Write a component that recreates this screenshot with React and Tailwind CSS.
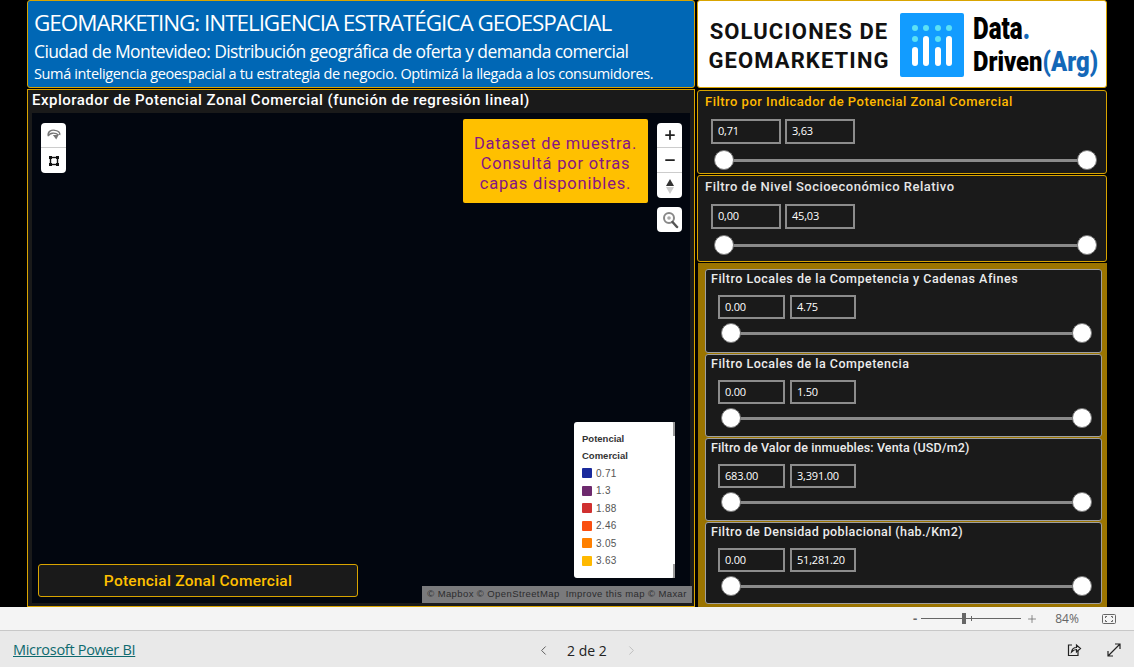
import { ChevronLeft, ChevronRight, Plus, Minus } from 'lucide-react';

const DIN = 'font-["Roboto",sans-serif]';
const LEGEND = [
  ['0.71', 'bg-[#1a2a9c]'],
  ['1.3', 'bg-[#6e2a6e]'],
  ['1.88', 'bg-[#d03030]'],
  ['2.46', 'bg-[#fa4f10]'],
  ['3.05', 'bg-[#ff8000]'],
  ['3.63', 'bg-[#ffb900]'],
];
const INNER = [
  { title: 'Filtro Locales de la Competencia y Cadenas Afines', min: '0.00', max: '4.75', h: 'h-[84px]', track: 'tracking-[0.5px]' },
  { title: 'Filtro Locales de la Competencia', min: '0.00', max: '1.50', h: 'h-[83px]', track: 'tracking-[0.5px]' },
  { title: 'Filtro de Valor de inmuebles: Venta (USD/m2)', min: '683.00', max: '3,391.00', h: 'h-[83px]', track: 'tracking-[0.12px]' },
  { title: 'Filtro de Densidad poblacional (hab./Km2)', min: '0.00', max: '51,281.20', h: 'h-[82px]', track: 'tracking-[0.4px]' },
];

function Slider() {
  return (
    <div className="relative flex h-[22px] items-center justify-between">
      <div className="absolute left-2 right-2 top-[10px] h-[3px] bg-[#8a8a8a]" />
      <span className="relative h-[20px] w-[20px] rounded-full border border-[#777] bg-white" />
      <span className="relative h-[20px] w-[20px] rounded-full border border-[#777] bg-white" />
    </div>
  );
}

function ValueBox({ value, className }) {
  return (
    <div className={`flex items-center border-2 border-[#8c8c8c] pl-[5px] font-['Open_Sans',sans-serif] text-[11px] tracking-[-0.2px] text-white ${className}`}>
      {value}
    </div>
  );
}

function OuterFilter({ title, min, max, titleColor, className }) {
  return (
    <div className={`rounded-[3px] border border-[#d9a400] bg-[#1a1a1a] pl-[7px] pr-[9px] ${className}`}>
      <div className={`${DIN} mt-[2px] text-[13px] font-medium leading-[17px] tracking-[0.49px] ${titleColor}`}>{title}</div>
      <div className="ml-[6px] mt-[9px] flex gap-[4px]">
        <ValueBox value={min} className="h-[25px] w-[70px]" />
        <ValueBox value={max} className="h-[25px] w-[70px]" />
      </div>
      <div className="ml-[9px] mt-[5px]">
        <Slider />
      </div>
    </div>
  );
}

function InnerFilter({ title, min, max, h, track }) {
  return (
    <div className={`${h} rounded-[3px] border border-[#a0a0a0] bg-[#1a1a1a] pl-[5px] pr-[9px]`}>
      <div className={`${DIN} mt-[1px] text-[12.5px] font-medium leading-[16px] ${track} text-[#ececec]`}>{title}</div>
      <div className="ml-[7px] mt-[8px] flex gap-[5px]">
        <ValueBox value={min} className="h-[24px] w-[67px]" />
        <ValueBox value={max} className="h-[24px] w-[66px]" />
      </div>
      <div className="ml-[10px] mt-[3px]">
        <Slider />
      </div>
    </div>
  );
}

function Logo() {
  return (
    <svg width="64" height="64" viewBox="0 0 64 64" className="h-[64px] w-[64px]">
      <rect width="64" height="64" rx="2" fill="#129cff" />
      <g fill="#5ce1f5">
        <circle cx="15" cy="15" r="3" />
        <circle cx="26" cy="15" r="3" />
        <circle cx="38" cy="15" r="3" />
        <circle cx="49" cy="15" r="3" />
        <circle cx="15" cy="26" r="3" />
        <circle cx="38" cy="26" r="3" />
      </g>
      <g fill="#fff">
        <rect x="12" y="34" width="6" height="19" rx="3" />
        <rect x="23" y="23" width="6" height="30" rx="3" />
        <rect x="35" y="34" width="6" height="19" rx="3" />
        <rect x="46" y="23" width="6" height="30" rx="3" />
      </g>
    </svg>
  );
}

function MapButton({ children, className }) {
  return <div className={`flex w-[25px] items-center justify-center ${className}`}>{children}</div>;
}

export default function App() {
  return (
    <div className="flex h-[667px] w-[1134px] flex-col overflow-hidden bg-black">
      <div className="flex h-[607px] gap-[2px] pl-[27px]">
        {/* left column */}
        <div className="flex w-[668px] flex-col gap-[1px]">
          <div className="h-[88px] rounded-[3px] border border-[#d9a400] bg-[#0067b5] pl-[6px] font-['Open_Sans',sans-serif] text-white">
            <div className="mt-[7px] text-[22.5px] leading-[30px] tracking-[-1.05px]">GEOMARKETING: INTELIGENCIA ESTRATÉGICA GEOESPACIAL</div>
            <div className="mt-[1px] text-[17.5px] leading-[24px] tracking-[-0.6px]">Ciudad de Montevideo: Distribución geográfica de oferta y demanda comercial</div>
            <div className="mt-[1px] text-[14.5px] leading-[20px] tracking-[-0.36px]">Sumá inteligencia geoespacial a tu estrategia de negocio. Optimizá la llegada a los consumidores.</div>
          </div>
          <div className="flex flex-1 flex-col border border-[#d9a400] bg-[#1a1a1a] px-[4px] pb-[3px]">
            <div className={`${DIN} h-[23px] pt-[1px] text-[15px] font-medium leading-[19px] tracking-[0.49px] text-white`}>Explorador de Potencial Zonal Comercial (función de regresión lineal)</div>
            <div className="relative flex-1 bg-[#02060f]">
              {/* left map controls */}
              <div className="absolute left-[9px] top-[10px] flex w-[25px] flex-col divide-y divide-[#ccc] rounded-[4px] bg-white">
                <MapButton className="h-[25px]">
                  <svg width="16" height="16" viewBox="0 0 14 14" fill="none" stroke="#777" strokeWidth="1.2">
                    <path d="M2 8 C1 4 5 2 8 3 C11 3.5 12.5 5 12 7 M2 8 C3 5 8 4.500 11 7" />
                    <path d="M6 7 L11 7 L9 11 Z" fill="#777" stroke="none" />
                  </svg>
                </MapButton>
                <MapButton className="h-[25px]">
                  <svg width="12" height="12" viewBox="0 0 12 12" fill="none" stroke="#111" strokeWidth="1.4">
                    <rect x="2.500" y="2.500" width="7" height="7" />
                    <g fill="#111" stroke="none">
                      <rect x="1" y="1" width="3" height="3" />
                      <rect x="8" y="1" width="3" height="3" />
                      <rect x="1" y="8" width="3" height="3" />
                      <rect x="8" y="8" width="3" height="3" />
                    </g>
                  </svg>
                </MapButton>
              </div>
              {/* note */}
              <div className={`${DIN} absolute left-[431px] top-[6px] flex h-[84px] w-[185px] items-center justify-center rounded-[2px] bg-[#ffc000] pt-[6px] text-center text-[16.5px] leading-[20px] tracking-[0.8px] text-[#851485]`}>
                <div>
                  Dataset de muestra.
                  <br />
                  Consultá por otras
                  <br />
                  capas disponibles.
                </div>
              </div>
              {/* zoom controls */}
              <div className="absolute left-[625px] top-[10px] flex w-[25px] flex-col divide-y divide-[#ccc] rounded-[4px] bg-white">
                <MapButton className="h-[25px]">
                  <Plus size={14} strokeWidth={3} color="#222" />
                </MapButton>
                <MapButton className="h-[25px]">
                  <Minus size={14} strokeWidth={3} color="#222" />
                </MapButton>
                <MapButton className="h-[25px]">
                  <svg width="10" height="18" viewBox="0 0 10 18">
                    <path d="M5 2 L9 9 L1 9 Z" fill="#333" />
                    <path d="M5 17 L9 10 L1 10 Z" fill="#ccc" />
                  </svg>
                </MapButton>
              </div>
              <div className="absolute left-[625px] top-[94px] flex h-[25px] w-[25px] items-center justify-center rounded-[4px] bg-white">
                <svg width="18" height="18" viewBox="0 0 18 18" fill="none">
                  <circle cx="8" cy="7" r="5" stroke="#888" strokeWidth="2" />
                  <circle cx="8" cy="7" r="1.800" fill="#aaa" />
                  <path d="M11.500 11 L16 16" stroke="#555" strokeWidth="2.500" strokeLinecap="round" />
                </svg>
              </div>
              {/* legend */}
              <div className="absolute left-[542px] top-[309px] h-[156px] w-[101px] rounded-[3px] bg-white pl-[8px] pt-[8px] font-['Liberation_Sans',sans-serif] text-[10px] text-[#555]">
                <div className="absolute right-0 top-0 h-[14px] w-[2px] bg-[#999]" />
                <div className="absolute bottom-0 right-0 h-[14px] w-[2px] bg-[#999]" />
                <div className="text-[9.500px] font-bold leading-[17px] text-[#333]">Potencial</div>
                <div className="text-[9.500px] font-bold leading-[17px] text-[#333]">Comercial</div>
                <div className="mt-[4px] flex flex-col gap-[7.500px]">
                  {LEGEND.map(([label, color]) => (
                    <div key={label} className="flex h-[10px] items-center gap-[4px] tracking-[0.3px]">
                      <span className={`h-[10px] w-[10px] rounded-[1px] ${color}`} />
                      {label}
                    </div>
                  ))}
                </div>
              </div>
              {/* bottom label */}
              <div className={`${DIN} absolute left-[6px] top-[451px] flex h-[33px] w-[320px] items-center justify-center rounded-[3px] border border-[#d9a400] bg-[#1a1a1a] pt-[3px] text-[15.500px] font-medium tracking-[0.25px] text-[#ffc000]`}>
                Potencial Zonal Comercial
              </div>
              {/* attribution */}
              <div className="absolute left-[390px] top-[473px] flex h-[17px] w-[270px] items-center justify-center whitespace-pre bg-[#7a7a7c] font-['Liberation_Sans',sans-serif] text-[9.500px] tracking-[0.4px] text-[#2c2c2e]">
                © Mapbox © OpenStreetMap  <b className="font-medium">Improve this map</b> © Maxar
              </div>
            </div>
          </div>
        </div>
        {/* right column */}
        <div className="flex w-[410px] flex-col">
          <div className="flex h-[88px] items-center rounded-[3px] border border-[#d9a400] bg-white pl-[9px]">
            <div className={`${DIN} mt-[5px] w-[184px] text-center text-[22px] font-bold leading-[28.500px] tracking-[1.1px] text-[#111]`}>
              SOLUCIONES DE
              <br />
              GEOMARKETING
            </div>
            <div className="ml-[9px] mt-[2px]">
              <Logo />
            </div>
            <div className={`${DIN} ml-[9px] mt-[-2px] w-[130px] text-black`}>
              <div className="origin-left scale-x-[0.78] text-[31px] font-black leading-[36px]">
                Data<span className="text-[#1468b8]">.</span>
              </div>
              <div className="origin-left scale-x-[0.85] whitespace-nowrap text-[28px] font-black leading-[29px]">
                Driven<span className="text-[#1468b8]">(Arg)</span>
              </div>
            </div>
          </div>
          <OuterFilter className="mt-[2px] h-[84px]" title="Filtro por Indicador de Potencial Zonal Comercial" min="0,71" max="3,63" titleColor="text-[#ffb900]" />
          <OuterFilter className="mt-[1px] h-[87px]" title="Filtro de Nivel Socioeconómico Relativo" min="0,00" max="45,03" titleColor="text-[#e6e6e6]" />
          <div className="ml-[1px] mt-[1px] flex flex-1 flex-col gap-[1px] bg-[#9b7400] pl-[7px] pr-[5px] pt-[6px]">
            {INNER.map((f) => (
              <InnerFilter key={f.title} {...f} />
            ))}
          </div>
        </div>
      </div>
      {/* zoom bar */}
      <div className="flex h-[24px] items-center border-b border-[#c8c8c8] bg-[#f4f4f4] font-['Open_Sans',sans-serif] text-[12px] text-[#666]">
        <span className="ml-[913px] text-[13px] font-bold leading-none">-</span>
        <div className="relative ml-[4px] h-[1px] w-[100px] bg-[#666]">
          <span className="absolute left-[41px] top-[-5px] h-[11px] w-[4px] bg-[#666]" />
          <span className="absolute left-[50px] top-[-2px] h-[5px] w-[1px] bg-[#666]" />
        </div>
        <Plus size={12} className="ml-[5px]" strokeWidth={1.5} />
        <span className="ml-[17px]">84%</span>
        <svg width="14" height="10" viewBox="0 0 14 10" fill="none" stroke="#666" className="ml-[23px]">
          <rect x="0.500" y="0.500" width="13" height="9" rx="1" />
          <path d="M3.500 4 V2.500 H5 M9 2.500 H10.500 V4 M10.500 6 V7.500 H9 M5 7.500 H3.500 V6" />
        </svg>
      </div>
      {/* footer */}
      <div className="flex flex-1 items-center bg-[#e9e9e9] pt-[2px] font-['Open_Sans',sans-serif]">
        <a className="ml-[13px] w-[120px] whitespace-nowrap text-[14.500px] tracking-[-0.3px] text-[#0e6a6f] underline">Microsoft Power BI</a>
        <ChevronLeft size={15} strokeWidth={1.5} color="#555" className="ml-[403px]" />
        <span className="ml-[16px] w-[40px] whitespace-nowrap text-[14px] text-[#222]">2 de 2</span>
        <ChevronRight size={15} strokeWidth={1.5} color="#bbb" className="ml-[17px]" />
        <svg width="16" height="16" viewBox="0 0 16 16" fill="none" stroke="#222" strokeWidth="1.200" className="ml-[427px]">
          <path d="M6 3 H2.500 V13.500 H12 V9" />
          <path d="M5.500 10 C6 7 8 5.500 10.500 5.500 V3 L14.500 6.500 L10.500 10 V7.500 C8.500 7.500 7 8.500 5.500 10 Z" />
        </svg>
        <svg width="14" height="14" viewBox="0 0 14 14" fill="none" stroke="#222" strokeWidth="1.200" className="ml-[25px]">
          <path d="M1 13 L13 1 M8 1 H13 V6 M1 8 V13 H6" />
        </svg>
      </div>
    </div>
  );
}
